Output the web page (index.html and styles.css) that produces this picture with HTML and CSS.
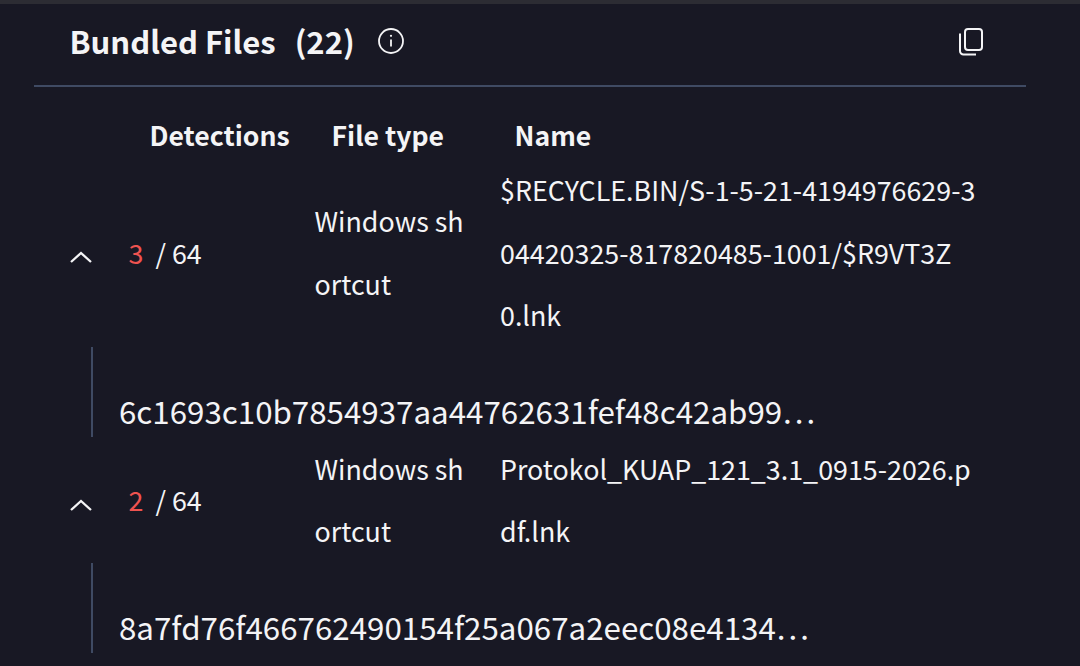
FILE: index.html
```html
<!DOCTYPE html>
<html lang="en">
<head>
<meta charset="utf-8">
<title>Bundled Files</title>
<link rel="stylesheet" href="styles.css">
</head>
<body>
<div class="topbar"></div>
<section class="panel">
  <header class="head">
    <h2 class="title">Bundled Files<span class="count">(22)</span></h2>
    <svg class="info" viewBox="0 0 26 26" width="26" height="26" fill="none" stroke="currentColor"><circle cx="13" cy="13" r="12" stroke-width="1.8"/><path d="M13 11.5v7" stroke-width="1.8"/><circle cx="13" cy="7.8" r="1.1" fill="currentColor" stroke="none"/></svg>
    <svg class="copy" viewBox="0 0 24 28" width="24" height="28" fill="none" stroke="currentColor" stroke-width="2"><rect x="6" y="1" width="17" height="21" rx="3"/><path d="M1 5.5V23a3.5 3.5 0 0 0 3.5 3.5H17"/></svg>
  </header>
  <div class="row thead">
    <div class="th th-det">Detections</div>
    <div class="th th-type">File type</div>
    <div class="th th-name">Name</div>
  </div>
  <div class="row frow">
    <div class="det">
      <svg class="chev" viewBox="0 0 22 12" width="22" height="12" fill="none" stroke="currentColor" stroke-width="2.3"><path d="M1 11 11 2l10 9"/></svg>
      <span class="red">3</span><span class="total">/ 64</span>
    </div>
    <div class="type">Windows shortcut</div>
    <div class="name">$RECYCLE.BIN/S-1-5-21-4194976629-304420325-817820485-1001/$R9VT3Z<br>0.lnk</div>
  </div>
  <div class="hash hash-a">6c1693c10b7854937aa44762631fef48c42ab99…</div>
  <div class="row frow">
    <div class="det">
      <svg class="chev" viewBox="0 0 22 12" width="22" height="12" fill="none" stroke="currentColor" stroke-width="2.3"><path d="M1 11 11 2l10 9"/></svg>
      <span class="red">2</span><span class="total">/ 64</span>
    </div>
    <div class="type">Windows shortcut</div>
    <div class="name">Protokol_KUAP_121_3.1_0915-2026.pdf.lnk</div>
  </div>
  <div class="hash">8a7fd76f466762490154f25a067a2eec08e4134…</div>
</section>
</body>
</html>
```
FILE: styles.css
```css
* { box-sizing: border-box; }
html, body { margin: 0; height: 100%; }
body {
  background: #181824;
  color: #f4f4f6;
  font-family: "Noto Sans CJK JP", "Noto Sans", sans-serif;
  overflow: hidden;
}
.topbar { height: 4px; background: #2c2c33; }
.panel { margin: 0 54px 0 34px; }
.head {
  display: flex;
  align-items: center;
  height: 83px;
  padding: 0 43px 8px 35.5px;
  border-bottom: 2px solid #3f4a63;
}
.title { margin: 0; font-size: 31px; font-weight: 700; line-height: 60px; }
.count { margin-left: 19px; }
.info { margin-left: 23px; }
.copy { margin-left: auto; margin-top: 2px; }
.row { display: grid; grid-template-columns: 280.5px 185.5px 1fr; }
.thead { height: 72px; align-items: center; padding-top: 22px; }
.th { font-size: 26.6px; font-weight: 700; white-space: nowrap; }
.th-det { padding-left: 115.5px; }
.th-type { padding-left: 17px; }
.th-name { padding-left: 14.5px; }
.frow { font-size: 26.85px; line-height: 62.5px; }
.det { display: flex; align-items: center; }
.chev { margin: 9px 0 0 36px; }
.red { color: #ef5350; margin-left: 36.5px; }
.total { margin-left: 12px; }
.type { width: 152px; word-break: break-all; align-self: center; }
.name { width: 480px; word-break: break-all; }
.hash {
  margin-left: 57px;
  padding: 38px 0 0 26px;
  height: 90px;
  border-left: 2px solid #3f4a63;
  font-size: 31.3px;
  line-height: 52px;
  white-space: nowrap;
}
.hash-a { margin-bottom: 1px; }
```
